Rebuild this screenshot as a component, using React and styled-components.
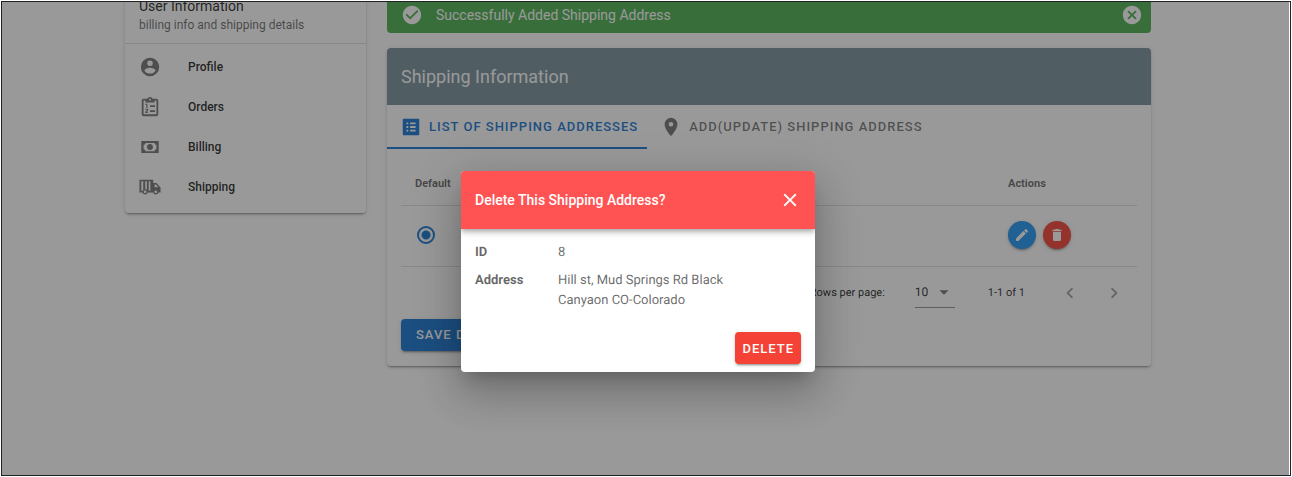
import React from "react";
import styled, { createGlobalStyle } from "styled-components";

const GlobalStyle = createGlobalStyle`
  *, *::before, *::after { box-sizing: border-box; }
  body {
    margin: 0;
    background: #fff;
    color: rgba(0, 0, 0, 0.87);
    font-family: Roboto, "Liberation Sans", sans-serif;
    font-size: 14px;
  }
  button, select, input { font-family: inherit; text-rendering: inherit; }
`;

const paths = {
  account:
    "M12,19.2C9.5,19.2 7.29,17.92 6,16C6.03,14 10,12.9 12,12.9C14,12.9 17.97,14 18,16C16.71,17.92 14.5,19.2 12,19.2M12,5A3,3 0 0,1 15,8A3,3 0 0,1 12,11A3,3 0 0,1 9,8A3,3 0 0,1 12,5M12,2A10,10 0 0,0 2,12A10,10 0 0,0 12,22A10,10 0 0,0 22,12C22,6.47 17.5,2 12,2Z",
  orders:
    "M19,3H14.8C14.4,1.8 13.3,1 12,1S9.6,1.8 9.2,3H5C3.9,3 3,3.9 3,5V20C3,21.1 3.9,22 5,22H19C20.1,22 21,21.1 21,20V5C21,3.9 20.1,3 19,3M12,3A1,1 0 0,1 12,5A1,1 0 0,1 12,3M19,20H5V5H7V7H17V5H19V20M12,10H17.5V12H12V10M12,15.5H17.5V17.5H12V15.5M7,8.5H9.2V13H8V9.5H7V8.5M6.8,14H10V16.2L8.2,17.6H10V18.6H6.8V17.3L8.8,15.6V15H6.8V14Z",
  billing:
    "M2.5,5.5H21.5V18.5H2.5V5.5M7,7.5C7,8.6 6.1,9.5 5,9.5V14.5C6.1,14.5 7,15.4 7,16.5H17C17,15.4 17.9,14.5 19,14.5V9.5C17.9,9.5 17,8.6 17,7.5H7M12,8.8A3.2,3.2 0 0,1 12,15.2A3.2,3.2 0 0,1 12,8.8Z",
  shipping:
    "M0.5,4H15.5V7.5H19L23.5,12.5V18H21.2A3,3 0 0,1 15.4,18H9.6A3,3 0 0,1 3.8,18H0.5V4M2.5,5.8V16.2H4.2A3,3 0 0,1 4.6,15.6V5.8H2.5M6.8,5.8V14.7H8.6V5.8H6.8M10.6,5.8V16.2H12.4V5.8H10.6M17,9.2V12.4H21.3L18.4,9.2H17M6.7,15.8A1.5,1.5 0 0,0 6.7,18.8A1.5,1.5 0 0,0 6.7,15.8M18.3,15.8A1.5,1.5 0 0,0 18.3,18.8A1.5,1.5 0 0,0 18.3,15.8Z",
  list:
    "M4,3H20A1,1 0 0,1 21,4V20A1,1 0 0,1 20,21H4A1,1 0 0,1 3,20V4A1,1 0 0,1 4,3M7,7V9H9V7H7M11,7V9H17V7H11M7,11V13H9V11H7M11,11V13H17V11H11M7,15V17H9V15H7M11,15V17H17V15H11Z",
  marker:
    "M12,11.5A2.5,2.5 0 0,1 9.5,9A2.5,2.5 0 0,1 12,6.5A2.5,2.5 0 0,1 14.5,9A2.5,2.5 0 0,1 12,11.5M12,2A7,7 0 0,0 5,9C5,14.25 12,22 12,22C12,22 19,14.25 19,9A7,7 0 0,0 12,2Z",
  check:
    "M12 2C6.5 2 2 6.5 2 12S6.5 22 12 22 22 17.5 22 12 17.5 2 12 2M10 17L5 12L6.41 10.59L10 14.17L17.59 6.58L19 8L10 17Z",
  closeCircle:
    "M12,2C17.53,2 22,6.47 22,12C22,17.53 17.53,22 12,22C6.47,22 2,17.53 2,12C2,6.47 6.47,2 12,2M15.59,7L12,10.59L8.41,7L7,8.41L10.59,12L7,15.59L8.41,17L12,13.41L15.59,17L17,15.59L13.41,12L17,8.41L15.59,7Z",
  close:
    "M19,6.41L17.59,5L12,10.59L6.41,5L5,6.41L10.59,12L5,17.59L6.41,19L12,13.41L17.59,19L19,17.59L13.41,12L19,6.41Z",
  pencil:
    "M20.71,7.04C21.1,6.65 21.1,6 20.71,5.63L18.37,3.29C18,2.9 17.35,2.9 16.96,3.29L15.12,5.12L18.87,8.87M3,18.2V20C3,20.6 3.4,21 4,21H5.8C6.3,21 6.6,20.9 7,20.6L17.81,9.93L14.06,6.18L3.4,17C3.1,17.4 3,17.7 3,18.2Z",
  trash:
    "M19,4H15.5L14.5,3H9.5L8.5,4H5V6H19M6,19A2,2 0 0,0 8,21H16A2,2 0 0,0 18,19V7H6V19Z",
  left: "M15.41,16.58L10.83,12L15.41,7.41L14,6L8,12L14,18L15.41,16.58Z",
  right: "M8.59,16.58L13.17,12L8.59,7.41L10,6L16,12L10,18L8.59,16.58Z",
  down: "M7,10L12,15L17,10H7Z",
};

const Svg = styled.svg`
  display: block;
  flex: none;
  fill: currentColor;
`;

const Icon = ({ name, size = 22 }) => (
  <Svg viewBox="0 0 24 24" width={size} height={size} aria-hidden="true">
    <path fillRule="evenodd" d={paths[name]} />
  </Svg>
);

const elevation =
  "0 3px 1px -2px rgba(0,0,0,.2), 0 2px 2px 0 rgba(0,0,0,.14), 0 1px 5px 0 rgba(0,0,0,.12)";

const Outer = styled.div`
  height: 100vh;
  padding: 1px;
`;

const Frame = styled.div`
  position: relative;
  height: 100%;
  overflow: hidden;
  border: 1px solid #202124;
  background: #fff;
`;

const Page = styled.div`
  display: flex;
  align-items: flex-start;
  gap: 21px;
  max-width: 1026px;
  margin: -20px auto 0;
`;

const Viewport = styled.div`
  height: 100%;
  padding-right: 16px;
  overflow: hidden;
`;

const Sidebar = styled.aside`
  flex: 0 0 241px;
  border-radius: 4px;
  background: #fff;
  box-shadow: ${elevation};
`;

const SidebarHead = styled.header`
  padding: 14px 14px 9px;
  border-bottom: 1px solid rgba(0, 0, 0, 0.12);
`;

const SidebarTitle = styled.h2`
  margin: 0;
  font-size: 14px;
  line-height: 20px;
  font-weight: 400;
`;

const SidebarText = styled.p`
  margin: 0;
  font-size: 12px;
  line-height: 18px;
  color: rgba(0, 0, 0, 0.6);
`;

const Nav = styled.nav`
  padding: 3px 0 6px;
`;

const NavLink = styled.a`
  display: flex;
  align-items: center;
  gap: 27px;
  height: 40px;
  padding: 0 14px;
  font-size: 12px;
  font-weight: 500;
  color: rgba(0, 0, 0, 0.87);
  text-decoration: none;

  svg { color: rgba(0, 0, 0, 0.54); }
`;

const Main = styled.main`
  flex: 1;
  min-width: 0;
`;

const Alert = styled.div`
  display: flex;
  align-items: center;
  gap: 13px;
  height: 51px;
  margin-bottom: 15px;
  padding: 14px 8px 0 14px;
  border-radius: 4px;
  background: #4caf50;
  color: #fff;
  font-size: 14px;

  span { flex: 1; }
`;

const PlainButton = styled.button`
  display: flex;
  align-items: center;
  justify-content: center;
  padding: 0;
  border: 0;
  background: none;
  color: inherit;
`;

const Card = styled.section`
  border-radius: 4px;
  background: #fff;
  box-shadow: ${elevation};
`;

const CardTitle = styled.h1`
  margin: 0;
  padding: 0 14px;
  border-radius: 4px 4px 0 0;
  background: #78909c;
  color: #fff;
  font-size: 18px;
  line-height: 57px;
  font-weight: 400;
`;

const Tabs = styled.div`
  display: flex;
`;

const Tab = styled.button`
  display: flex;
  align-items: center;
  gap: 7px;
  height: 44px;
  padding: 1px 9px 0 13px;
  border: 0;
  border-bottom: 2px solid ${(p) => (p.$active ? "#1976d2" : "transparent")};
  background: none;
  color: ${(p) => (p.$active ? "#1976d2" : "rgba(0,0,0,.54)")};
  font-size: 13px;
  font-weight: 500;
  letter-spacing: 1px;
  text-transform: uppercase;
`;

const CardBody = styled.div`
  padding: 13px 14px 15px;
`;

const Table = styled.table`
  width: 100%;
  border-collapse: collapse;

  th, td {
    padding: 0 14px;
    border-bottom: 1px solid rgba(0, 0, 0, 0.12);
    text-align: left;
  }
  th {
    height: 43px;
    font-size: 11px;
    font-weight: 700;
    color: rgba(0, 0, 0, 0.6);
  }
  td { height: 61px; padding-bottom: 2px; }
  th:last-child, td:last-child { width: 143px; }
`;

const Radio = styled.input`
  appearance: none;
  display: block;
  width: 18px;
  height: 18px;
  margin: 0 2px;
  border: 2px solid #1976d2;
  border-radius: 50%;
  background: radial-gradient(circle, #1976d2 4px, transparent 5px);
`;

const Actions = styled.div`
  display: flex;
  gap: 7px;
`;

const RoundButton = styled(PlainButton)`
  width: 28px;
  height: 28px;
  border-radius: 50%;
  background: ${(p) => p.$color};
  color: #fff;
  box-shadow: ${elevation};
`;

const Footer = styled.div`
  display: flex;
  align-items: center;
  justify-content: flex-end;
  height: 52px;
  padding-right: 12px;
  font-size: 11px;
  color: rgba(0, 0, 0, 0.87);
  text-rendering: geometricPrecision;
`;

const PageSize = styled.label`
  display: flex;
  align-items: center;
  gap: 30px;
`;

const SelectBox = styled.span`
  display: flex;
  align-items: center;
  width: 40px;
  height: 30px;
  border-bottom: 1px solid rgba(0, 0, 0, 0.42);

  svg { margin-left: -22px; color: rgba(0, 0, 0, 0.54); }
`;

const Select = styled.select`
  appearance: none;
  flex: none;
  width: 40px;
  padding: 0;
  border: 0;
  background: none;
  color: inherit;
  font-size: 12px;
`;

const Range = styled.span`
  margin: 0 34px 0 33px;
`;

const Pager = styled.div`
  display: flex;
  gap: 22px;
  color: rgba(0, 0, 0, 0.38);
`;

const FilledButton = styled.button`
  height: 32px;
  padding: 0 ${(p) => p.$pad}px;
  border: 0;
  border-radius: 4px;
  background: ${(p) => p.$color};
  box-shadow: ${elevation};
  color: #fff;
  font-size: 13px;
  font-weight: 500;
  letter-spacing: 1px;
  text-transform: uppercase;
`;

const Overlay = styled.div`
  position: absolute;
  inset: 0 1px 0 0;
  display: flex;
  align-items: center;
  justify-content: center;
  padding: 66px 15px 0 0;
  background: rgba(33, 33, 33, 0.46);
`;

const Dialog = styled.div`
  width: 354px;
  border-radius: 4px;
  overflow: hidden;
  background: #fff;
  box-shadow: 0 11px 15px -7px rgba(0, 0, 0, 0.2),
    0 24px 38px 3px rgba(0, 0, 0, 0.14), 0 9px 46px 8px rgba(0, 0, 0, 0.12);
`;

const DialogHead = styled.header`
  display: flex;
  align-items: center;
  justify-content: space-between;
  height: 58px;
  padding: 0 14px;
  background: #ff5252;
  box-shadow: 0 2px 4px -1px rgba(0, 0, 0, 0.2),
    0 4px 5px 0 rgba(0, 0, 0, 0.14), 0 1px 10px 0 rgba(0, 0, 0, 0.12);
  color: #fff;
`;

const DialogTitle = styled.h2`
  margin: 0;
  font-size: 14px;
  font-weight: 500;
`;

const Details = styled.dl`
  display: grid;
  grid-template-columns: 83px 180px;
  row-gap: 8px;
  margin: 0;
  padding: 14px 14px 21px;
  font-size: 13px;
  line-height: 20px;
  color: rgba(0, 0, 0, 0.6);
  text-rendering: geometricPrecision;

  dt { font-weight: 700; }
  dd { margin: 0; }
`;

const DialogActions = styled.footer`
  display: flex;
  justify-content: flex-end;
  padding: 0 14px 8px;
`;

const navItems = [
  ["account", "Profile"],
  ["orders", "Orders"],
  ["billing", "Billing"],
  ["shipping", "Shipping"],
];

export default function App() {
  return (
    <Outer>
      <GlobalStyle />
      <Frame>
        <Viewport>
          <Page>
            <Sidebar>
              <SidebarHead>
                <SidebarTitle>User Information</SidebarTitle>
                <SidebarText>billing info and shipping details</SidebarText>
              </SidebarHead>
              <Nav>
                {navItems.map(([icon, label]) => (
                  <NavLink href="#" key={label}>
                    <Icon name={icon} />
                    {label}
                  </NavLink>
                ))}
              </Nav>
            </Sidebar>
            <Main>
              <Alert role="status">
                <Icon name="check" />
                <span>Successfully Added Shipping Address</span>
                <PlainButton aria-label="Dismiss">
                  <Icon name="closeCircle" />
                </PlainButton>
              </Alert>
              <Card>
                <CardTitle>Shipping Information</CardTitle>
                <Tabs role="tablist">
                  <Tab role="tab" aria-selected="true" $active>
                    <Icon name="list" />
                    List of Shipping Addresses
                  </Tab>
                  <Tab role="tab" aria-selected="false">
                    <Icon name="marker" />
                    Add(Update) Shipping Address
                  </Tab>
                </Tabs>
                <CardBody>
                  <Table>
                    <thead>
                      <tr>
                        <th>Default</th>
                        <th>Actions</th>
                      </tr>
                    </thead>
                    <tbody>
                      <tr>
                        <td>
                          <Radio type="radio" name="default" aria-label="Default address" defaultChecked />
                        </td>
                        <td>
                          <Actions>
                            <RoundButton $color="#2196f3" aria-label="Edit">
                              <Icon name="pencil" size={16} />
                            </RoundButton>
                            <RoundButton $color="#f44336" aria-label="Delete address">
                              <Icon name="trash" size={16} />
                            </RoundButton>
                          </Actions>
                        </td>
                      </tr>
                    </tbody>
                  </Table>
                  <Footer>
                    <PageSize>
                      Rows per page:
                      <SelectBox>
                        <Select defaultValue="10">
                          <option>10</option>
                        </Select>
                        <Icon name="down" />
                      </SelectBox>
                    </PageSize>
                    <Range>1-1 of 1</Range>
                    <Pager>
                      <PlainButton aria-label="Previous page">
                        <Icon name="left" />
                      </PlainButton>
                      <PlainButton aria-label="Next page">
                        <Icon name="right" />
                      </PlainButton>
                    </Pager>
                  </Footer>
                  <FilledButton $color="#1976d2" $pad={15}>Save Default</FilledButton>
                </CardBody>
              </Card>
            </Main>
          </Page>
        </Viewport>
        <Overlay>
          <Dialog role="dialog" aria-labelledby="dialog-title">
            <DialogHead>
              <DialogTitle id="dialog-title">Delete This Shipping Address?</DialogTitle>
              <PlainButton aria-label="Close">
                <Icon name="close" />
              </PlainButton>
            </DialogHead>
            <Details>
              <dt>ID</dt>
              <dd>8</dd>
              <dt>Address</dt>
              <dd>Hill st, Mud Springs Rd Black Canyaon CO-Colorado</dd>
            </Details>
            <DialogActions>
              <FilledButton $color="#f44336" $pad={7}>Delete</FilledButton>
            </DialogActions>
          </Dialog>
        </Overlay>
      </Frame>
    </Outer>
  );
}
